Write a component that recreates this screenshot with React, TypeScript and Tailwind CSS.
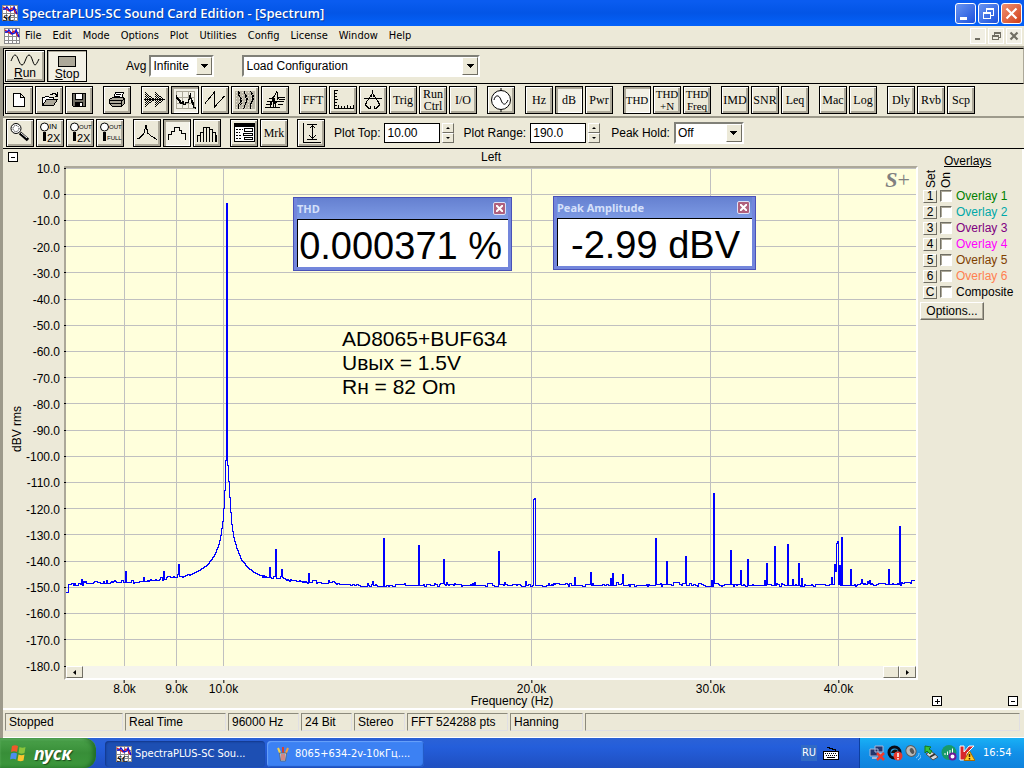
import type { ReactNode } from "react";
import { clsx } from "clsx";

const TAHOMA = "font-['DejaVu_Sans_Condensed','DejaVu_Sans',sans-serif]";
const ARIAL = "font-['Liberation_Sans',sans-serif]";

const MENU = ["File", "Edit", "Mode", "Options", "Plot", "Utilities", "Config", "License", "Window", "Help"];

/* ── Spectrum data ──────────────────────────────────── */

const PLOT_W = 850;
const PLOT_H = 498;

const X_TICKS = [
  { x: 58, label: "8.0k" },
  { x: 110, label: "9.0k" },
  { x: 157, label: "10.0k" },
  { x: 465, label: "20.0k" },
  { x: 644, label: "30.0k" },
  { x: 772, label: "40.0k" },
];

const Y_TICKS = Array.from({ length: 20 }, (_, i) => 10 - i * 10);

// Noise floor and the skirt of the fundamental, [x, y] in plot units
const FLOOR: [number, number][] = [
  [3, 416], [58, 414], [77, 413], [97, 411], [122, 407], [131, 403], [140, 397], [145, 391], [149, 384],
  [152, 376], [154, 367], [156, 353], [157, 340], [158, 322], [159, 292], [161, 297], [163, 329], [164, 344],
  [165, 356], [167, 369], [170, 380], [175, 392], [182, 400], [189, 405], [199, 409], [214, 410], [224, 413],
  [247, 414], [277, 416], [307, 417], [750, 417], [830, 416], [849, 414],
];

const PEAKS: Record<number, number> = {
  15: 411, 40: 412, 48: 412, 59: 403, 77: 409, 97: 403, 112: 396, 160: 35,
  203: 399, 209: 381, 215: 401, 242: 405, 262: 412, 306: 413, 317: 370, 352: 377, 377: 391, 432: 383,
  459: 413, 467: 331, 468: 330, 508: 409, 524: 404, 544: 410, 546: 405, 556: 406, 589: 370, 600: 393,
  619: 388, 645: 412, 647: 325, 664: 382, 674: 402, 681: 391, 698: 412, 700: 395, 708: 378, 721: 376,
  726: 411, 732: 395, 735: 410, 765: 409, 768: 396, 769: 403, 770: 375, 771: 373, 773: 397, 775: 369,
  784: 401, 795: 411, 803: 412, 822: 401, 833: 358,
};

function floorAt(x: number) {
  const i = FLOOR.findIndex((p) => p[0] >= x);
  if (i <= 0) return FLOOR[0][1];
  const [x0, y0] = FLOOR[i - 1];
  const [x1, y1] = FLOOR[i];
  return Math.round(y0 + ((y1 - y0) * (x - x0)) / (x1 - x0));
}

function buildTrace() {
  let seed = 7;
  const rnd = () => {
    seed = (seed * 16807) % 2147483647;
    return seed / 2147483647;
  };
  let d = "M0 424.5H2.5";
  let noise = 0;
  for (let x = 2; x < PLOT_W - 2; x++) {
    if (rnd() > 0.5) {
      const r = rnd();
      noise = r < 0.5 ? 0 : r < 0.75 ? -1 : r < 0.87 ? 1 : r < 0.97 ? -2 : -3;
    }
    const calm = x > 128 && x < 195;
    const y = PEAKS[x] ?? floorAt(x) + (calm ? 0 : noise);
    d += `V${y + 0.5}H${x + 1.5}`;
  }
  return d;
}

const TRACE = buildTrace();

/* ── Small controls ─────────────────────────────────── */

function ToolButton({ label, pressed, children }: { label: string; pressed?: boolean; children: ReactNode }) {
  return (
    <button
      aria-label={label}
      aria-pressed={pressed}
      className={clsx(
        "flex size-7 shrink-0 flex-col items-center justify-center border border-black font-['Liberation_Serif',serif] text-xs leading-3 text-black",
        pressed
          ? "bg-[#f3f1e6] shadow-[inset_2px_2px_0_#aca899,inset_-1px_-1px_0_#fff]"
          : "bg-[#ece9d8] shadow-[inset_1px_1px_0_#fff,inset_-2px_-2px_0_#aca899]"
      )}
    >
      {children}
    </button>
  );
}

function Icon({ children }: { children: ReactNode }) {
  return (
    <svg viewBox="0 0 26 26" className="size-[26px] fill-none stroke-black" shapeRendering="crispEdges">
      {children}
    </svg>
  );
}

function Combo({ label, value, className }: { label: string; value: string; className: string }) {
  return (
    <div
      className={clsx(
        "relative h-[22px] border-2 border-t-[#808078] border-r-white border-b-white border-l-[#808078] bg-white",
        className
      )}
    >
      <select aria-label={label} className="block h-full w-full appearance-none bg-white pl-0.5 text-xs text-black outline-none">
        <option>{value}</option>
      </select>
      <span className="pointer-events-none absolute inset-y-0 right-0 flex w-4 items-center justify-center border border-t-white border-r-[#716f64] border-b-[#716f64] border-l-white bg-[#ece9d8]">
        <svg viewBox="0 0 7 4" className="h-1 w-[7px]" shapeRendering="crispEdges">
          <path d="M0 0h7L3.500 4z" />
        </svg>
      </span>
    </div>
  );
}

function NumberField({ id, label, value }: { id: string; label: string; value: string }) {
  return (
    <div className="flex items-center">
      <label htmlFor={id} className="mr-1 whitespace-nowrap">
        {label}
      </label>
      <input id={id} defaultValue={value} className="h-5 w-14 border border-black bg-white px-0.5 text-xs text-black outline-none" />
      <div className="ml-0.5 flex flex-col">
        {["up", "down"].map((dir) => (
          <button
            key={dir}
            aria-label={`${label} ${dir}`}
            className="flex h-2.5 w-3 items-center justify-center border border-t-white border-r-[#716f64] border-b-[#716f64] border-l-white"
          >
            <svg viewBox="0 0 4 2" className="h-0.5 w-1">
              <path d={dir === "up" ? "M0 2h4L2 0z" : "M0 0h4L2 2z"} />
            </svg>
          </button>
        ))}
      </div>
    </div>
  );
}

function ExpandBox({ label, plus }: { label: string; plus?: boolean }) {
  return (
    <button aria-label={label} className="flex size-2.5 shrink-0 items-center justify-center border border-black bg-white">
      <svg viewBox="0 0 8 8" className="size-2 stroke-black" shapeRendering="crispEdges">
        <path d={plus ? "M2 4.500h5M4.500 2v5" : "M2 4.500h4"} />
      </svg>
    </button>
  );
}

function AppLogo({ small }: { small?: boolean }) {
  return (
    <svg viewBox="0 0 16 16" className="size-4 shrink-0">
      <path fill="#fff" d="M0 0h16v16H0z" />
      <path
        stroke="#8c8c8c"
        fill="none"
        shapeRendering="crispEdges"
        d="M.5 0v16M4.500 0v16M8.500 0v16M12.500 0v16M15.500 0v16M0 .5h16M0 4.500h16M0 8.500h16M0 12.500h16M0 15.500h16"
      />
      <path stroke="#e01020" strokeWidth="1.300" fill="none" d="M1 2l3 2 3 2 3-3 2 1 1 3 2 2" />
      <path stroke="#1010e0" strokeWidth="1.300" fill="none" d="M1 4h2l2-2 3 4 3-1 1-3 2 4 1 3" />
      {!small && (
        <text x="1" y="15.500" fontSize="9" fontWeight="bold" fontStyle="italic" className="font-['Liberation_Serif',serif]">
          SC
        </text>
      )}
    </svg>
  );
}

function Magnifier({ line1, line2 }: { line1: string; line2: string }) {
  return (
    <svg viewBox="0 0 26 26" className="size-[26px] fill-none stroke-black">
      <circle cx="7.500" cy="7" r="4" fill="#fff" />
      <path d="M7.500 12v9" strokeWidth="3" />
      <g stroke="none" fill="#000" className={ARIAL}>
        <text x="12" y="9" fontSize={line1 === "IN" ? 8 : 6}>{line1}</text>
        <text x="10" y={line2 === "2X" ? 22 : 20} fontSize={line2 === "2X" ? 11 : 6}>{line2}</text>
      </g>
    </svg>
  );
}

/* ── Toolbars ───────────────────────────────────────── */

function MainToolbar() {
  return (
    <div className="flex h-9 items-center border border-r-[#aca899] border-black px-px text-xs">
      <button className="flex h-8 w-10 flex-col items-center border border-black text-xs leading-3 shadow-[inset_1px_1px_0_#fff,inset_-2px_-2px_0_#aca899]">
        <svg viewBox="0 0 30 14" className="mt-0.5 h-3.5 w-[30px] fill-none stroke-black">
          <path d="M1 8C3 3 4 2 5 2c3 0 4 10 7 10s4-10 7-10 4 10 6 10c1 0 2-2 4-6" />
        </svg>
        <span><u>R</u>un</span>
      </button>
      <button
        aria-pressed="true"
        className="ml-0.5 flex h-8 w-10 flex-col items-center border border-black bg-[#f3f1e6] text-xs leading-3 shadow-[inset_1px_1px_0_#aca899]"
      >
        <span className="mt-[5px] mb-px h-[11px] w-[18px] border border-black bg-[#aca899]" />
        <span><u>S</u>top</span>
      </button>
      <span className="mr-[3px] ml-[39px]">Avg</span>
      <Combo label="Averaging" value="Infinite" className="w-[65px]" />
      <Combo label="Configuration" value="Load Configuration" className="ml-7 w-[238px]" />
    </div>
  );
}

function ViewToolbar() {
  return (
    <div className="flex h-8 items-center gap-2.5 border-l border-black px-px">
      <div className="flex gap-0.5">
        <ToolButton label="New">
          <Icon><path d="M7.500 6.500h7l4 4v9h-11zM14.500 6.500v4h4" fill="#fff" /></Icon>
        </ToolButton>
        <ToolButton label="Open">
          <Icon>
            <path d="M6.500 18.500v-8h2l1-1h3l1 1h4v2" fill="#fff" />
            <path d="M6.500 18.500l4-6h11l-4 6z" fill="#aca899" />
            <path d="M14 7.500h2l1-1h2l2 2M21.500 5v4h-3" />
          </Icon>
        </ToolButton>
        <ToolButton label="Save">
          <Icon>
            <path d="M6.500 6.500h13v13h-12l-1-1z" fill="#716f64" />
            <path d="M9.500 6.500h7v6h-7z" fill="#fff" />
            <path d="M9 15h8v5H9z" fill="#000" stroke="none" />
            <path d="M14 16h2v3h-2z" fill="#fff" stroke="none" />
          </Icon>
        </ToolButton>
      </div>

      <ToolButton label="Print">
        <Icon>
          <path d="M9.500 11.500l2-6h8l-2 6z" fill="#fff" />
          <path d="M12 7.500h5M11 9.500h5" />
          <path d="M5.500 12.500l3-2h11l1 2v4l-3 3h-9l-3-3z" fill="#aca899" />
          <path d="M5 13.500h13M6 16.500h12M17.500 13v6M20 12l-2 2" />
        </Icon>
      </ToolButton>

      <div className="flex gap-0.5">
        <ToolButton label="Time series">
          <Icon>
            <path d="M2 12.500h21" />
            <path d="M3.500 5v16M5.500 7v12M7.500 9v8M9.500 10v6M11.500 11v4M13.500 5v16M15.500 7v12M17.500 9v8M19.500 10v6" strokeDasharray="1 1" />
            <path d="M4.500 6v14M6.500 8v10M8.500 9v8M10.500 11v4M14.500 6v14M16.500 8v10M18.500 9v8M20.500 11v4" strokeDasharray="1 1" />
          </Icon>
        </ToolButton>
        <ToolButton label="Spectrum" pressed>
          <Icon>
            <path stroke="#aca899" d="M4.500 4v18M10.500 4v18M16.500 4v18M22.500 4v18M4 4.500h19M4 10.500h19M4 16.500h19M4 21.500h19" />
            <path d="M4.500 8v3h2v2h2v3h2v-2h1v3h2v-2h3v-3h1v-3h1V6v5h1v4h2v5h2v2" />
            <path d="M5.500 10v2h2v3h2v1M17.500 10V8M20.500 13v5" />
          </Icon>
        </ToolButton>
        <ToolButton label="Phase">
          <Icon><path d="M3 16.500L12.500 5v15L22.500 9" /></Icon>
        </ToolButton>
        <ToolButton label="Spectrogram">
          <Icon>
            <path d="M3 4h20v18H3z" fill="#bcb8a8" stroke="none" />
            <path d="M4 5.500h18M4 8.500h18M4 11.500h18M4 14.500h18M4 17.500h18M4 20.500h18" stroke="#ece9d8" strokeDasharray="1 2" />
            <path d="M6.500 4v4l2 3v4l-2 3v4M12.500 4l1 5 1 4-1 4-2 5M18.500 4l2 5v4l-2 4v5" />
            <path d="M7.500 5v4l2 3v4l-2 3M14.500 8l1 4-1 5M19.500 5l2 4v4l-2 4" strokeDasharray="2 1" />
          </Icon>
        </ToolButton>
        <ToolButton label="3D surface">
          <Icon>
            <path d="M3 20.500h15M4 17.500h5l2-6 2 5 2-2h6M5 14.500h5l2-3 1 3M7 11.500h3l2-2 3-5 1 6h7M9 14.500h4v5M15 8l2 4h6M14 14.500h8M16 17.500h5M8 20v-5M11 20v-6M15.500 5v8" />
          </Icon>
        </ToolButton>
      </div>

      <div className="flex gap-0.5">
        <ToolButton label="FFT settings">FFT</ToolButton>
        <ToolButton label="Scaling">
          <Icon><path d="M4.500 3v18.500H24M4 3.500h4M4 6.500h3M4 9.500h3M4 12.500h4M4 15.500h3M4 18.500h3M8.500 22v-4M11.500 22v-3M14.500 22v-3M17.500 22v-4M20.500 22v-3M23.500 22v-4" /></Icon>
        </ToolButton>
        <ToolButton label="Calibration">
          <Icon><path d="M12.500 3v4M4 11.500h18M12.500 6l-3 5-3 4-1 3 3 3h2v-2M12.500 6l3 5 3 4 1 3-3 3h-2v-2M11.500 7v3M13.500 7v3" /></Icon>
        </ToolButton>
        <ToolButton label="Trigger">Trig</ToolButton>
        <ToolButton label="Run control"><span>Run</span><span>Ctrl</span></ToolButton>
        <ToolButton label="Input and output">I/O</ToolButton>
      </div>

      <ToolButton label="Signal generator">
        <svg viewBox="0 0 26 26" className="size-[26px] fill-none stroke-black">
          <circle cx="13" cy="13" r="9.500" fill="#fff" />
          <path d="M13 1v3M13 22v3M6 13c1-5 5-6 7 0s5 5 7 0" />
        </svg>
      </ToolButton>

      <div className="flex gap-0.5">
        <ToolButton label="Hertz">Hz</ToolButton>
        <ToolButton label="Decibels" pressed>dB</ToolButton>
        <ToolButton label="Power">Pwr</ToolButton>
      </div>
      <div className="flex gap-0.5">
        <ToolButton label="THD" pressed><span className="text-[11px]">THD</span></ToolButton>
        <ToolButton label="THD+N"><span className="text-[11px]">THD</span><span className="text-[11px]">+N</span></ToolButton>
        <ToolButton label="THD versus frequency"><span className="text-[11px]">THD</span><span className="text-[11px]">Freq</span></ToolButton>
      </div>
      <div className="flex gap-0.5">
        <ToolButton label="IMD">IMD</ToolButton>
        <ToolButton label="SNR">SNR</ToolButton>
        <ToolButton label="Leq">Leq</ToolButton>
      </div>
      <div className="flex gap-0.5">
        <ToolButton label="Macro">Mac</ToolButton>
        <ToolButton label="Log">Log</ToolButton>
      </div>
      <div className="flex gap-0.5">
        <ToolButton label="Delay">Dly</ToolButton>
        <ToolButton label="Reverb">Rvb</ToolButton>
        <ToolButton label="Scope">Scp</ToolButton>
      </div>
    </div>
  );
}

function PlotToolbar() {
  return (
    <div className="flex items-center gap-[9px] border-t-2 border-b border-t-[#9d9a8b] border-b-black py-px pl-[3px] text-xs">
      <div className="flex gap-0.5">
        <ToolButton label="Zoom">
          <svg viewBox="0 0 26 26" className="size-[26px] fill-none stroke-black">
            <circle cx="9" cy="8.500" r="5" fill="#fff" />
            <circle cx="9" cy="8.500" r="3" strokeDasharray="1 1" />
            <path d="M13 13l8 7" strokeWidth="3.500" />
            <path d="M14 13l6 5" stroke="#fff" />
          </svg>
        </ToolButton>
        <ToolButton label="Zoom in 2X"><Magnifier line1="IN" line2="2X" /></ToolButton>
        <ToolButton label="Zoom out 2X"><Magnifier line1="OUT" line2="2X" /></ToolButton>
        <ToolButton label="Zoom out full"><Magnifier line1="OUT" line2="FULL" /></ToolButton>
      </div>
      <div className="flex gap-0.5">
        <ToolButton label="Line">
          <Icon><path d="M3 18.500h2l3-3 2-2 2-8 2 8 4 3 5 3M12.500 5v5" /></Icon>
        </ToolButton>
        <ToolButton label="Steps" pressed>
          <Icon><path d="M4.500 20v-6h3v-3h3V7.500h5v3h2v3h4V20" /></Icon>
        </ToolButton>
        <ToolButton label="Bars">
          <Icon><path d="M3.500 22v-7h3v7M6.500 15v-3h3v10M9.500 12V7.500h3V22M12.500 7.500h3V22M15.500 9.500h3V22M18.500 12.500h3V22M21.500 15.500h1V22" /></Icon>
        </ToolButton>
      </div>
      <div className="flex gap-0.5">
        <ToolButton label="Properties">
          <Icon>
            <path d="M3.500 3.500h20v18h-20z" fill="#fff" />
            <path d="M3 5h21" strokeWidth="3" />
            <path d="M5 9.500h7M5 12.500h4M5 15.500h5M5 18.500h5" strokeDasharray="2 1" />
            <path d="M13.500 8.500h8v3h-8zM12.500 13.500h9v2h-9zM13.500 17.500h8v2h-8z" />
          </Icon>
        </ToolButton>
        <ToolButton label="Markers">Mrk</ToolButton>
      </div>
      <ToolButton label="Auto scale">
        <Icon><path d="M5.500 3v19H23M9 4.500h10M9 19.500h10M14.500 5v14M11.500 8.500l3-3 3 3M11.500 15.500l3 3 3-3" /></Icon>
      </ToolButton>
      <NumberField id="plot-top" label="Plot Top:" value="10.00" />
      <NumberField id="plot-range" label="Plot Range:" value="190.0" />
      <div className="ml-0.5 flex items-center gap-1 whitespace-nowrap">
        <span>Peak Hold:</span>
        <Combo label="Peak hold" value="Off" className="w-[70px]" />
      </div>
    </div>
  );
}

/* ── Plot ───────────────────────────────────────────── */

interface ValueWindowProps {
  title: string;
  value: string;
  className: string;
  valueClassName: string;
}

function ValueWindow({ title, value, className, valueClassName }: ValueWindowProps) {
  return (
    <div className={clsx("absolute border border-[#4a52b8] bg-[#7386dc] px-[3px] pb-[3px]", className)}>
      <div className="flex h-[21px] items-center justify-between bg-linear-to-b from-[#6580d0] to-[#7d9ae4]">
        <span className="pt-0.5 font-['Noto_Sans',sans-serif] text-[11px] font-bold text-[#d5e0fa]">{title}</span>
        <button aria-label={`Close ${title}`} className="mr-0.5 flex size-[13px] items-center justify-center rounded-xs border border-[#dce2f8] bg-[#b0607c]">
          <svg viewBox="0 0 7 7" className="size-[7px] stroke-white" strokeWidth="2">
            <path d="M0 0l7 7M7 0L0 7" />
          </svg>
        </button>
      </div>
      <div
        className={clsx(
          "h-12 border-t border-l border-black bg-white text-right text-[38px] leading-[53px] whitespace-nowrap text-black",
          valueClassName
        )}
      >
        {value}
      </div>
    </div>
  );
}

function Plot() {
  return (
    <div className="flex min-w-0 flex-1 flex-col text-xs">
      <h2 className="h-[17px] text-center leading-[17px]">Left</h2>
      <div className="relative flex min-h-0 flex-1 flex-col border-2 border-t-[#aca899] border-r-white border-b-white border-l-[#aca899] bg-[#ffffdc]">
        <div className="relative min-h-0 flex-1">
          <svg
            viewBox={`0 0 ${PLOT_W} ${PLOT_H}`}
            preserveAspectRatio="none"
            className="absolute inset-0 h-full w-full overflow-visible fill-none"
            shapeRendering="crispEdges"
          >
            {Y_TICKS.map((db, i) => {
              const y = Math.floor((i * PLOT_H) / 19) + 0.5;
              return (
                <g key={db}>
                  {i < 19 && <path d={`M0 ${y}H${PLOT_W}`} stroke="#c0c0c0" />}
                  <path d={`M-2 ${y}H0`} stroke="#000" />
                </g>
              );
            })}
            {X_TICKS.map((t) => (
              <path key={t.x} d={`M${t.x + 0.5} 0V${PLOT_H}`} stroke="#c0c0c0" />
            ))}
            <path d={TRACE} stroke="#0000ff" />
          </svg>
          <span className="absolute top-0 right-1.5 font-['Liberation_Serif',serif] text-[22px] leading-6 text-[#808080]">
            <b className="italic">S</b>+
          </span>
          <p className="absolute top-[159px] left-[276px] text-[21px] leading-6 whitespace-pre text-black">
            {"AD8065+BUF634\nUвых = 1.5V\nRн = 82 Om"}
          </p>
          <ValueWindow title="THD" value="0.000371 %" className="top-[29px] left-[227px] w-[219px]" valueClassName="pr-1.5" />
          <ValueWindow title="Peak Amplitude" value="-2.99 dBV" className="top-7 left-[487px] w-[203px]" valueClassName="pr-3" />
        </div>
        {/* Horizontal scroller */}
        <div className="flex h-3 bg-[#f5f4ec]">
          <button aria-label="Scroll left" className="flex w-[17px] items-center justify-center border border-t-white border-r-[#716f64] border-b-[#716f64] border-l-white bg-[#ece9d8]">
            <svg viewBox="0 0 3 5" className="h-[5px] w-[3px]"><path d="M3 0v5L0 2.500z" /></svg>
          </button>
          <div className="flex-1" />
          <div className="w-4 border border-t-white border-r-[#716f64] border-b-[#716f64] border-l-white bg-[#ece9d8]" />
          <button aria-label="Scroll right" className="flex w-[17px] items-center justify-center border border-t-white border-r-[#716f64] border-b-[#716f64] border-l-white bg-[#ece9d8]">
            <svg viewBox="0 0 3 5" className="h-[5px] w-[3px]"><path d="M0 0v5l3-2.500z" /></svg>
          </button>
        </div>
      </div>
      <div className="relative mx-0.5 h-[15px]">
        {X_TICKS.map((t) => (
          <span
            key={t.x}
            className="absolute top-0 flex -translate-x-1/2 flex-col items-center leading-3 before:h-[3px] before:w-px before:bg-black"
            style={{ left: `${((t.x + 0.5) / PLOT_W) * 100}%` }}
          >
            {t.label}
          </span>
        ))}
      </div>
      <p className="h-[13px] pl-[42px] text-center leading-[13px]">Frequency (Hz)</p>
    </div>
  );
}

const OVERLAYS = [
  { key: "1", name: "Overlay 1", color: "text-[#008000]" },
  { key: "2", name: "Overlay 2", color: "text-[#00a8a8]" },
  { key: "3", name: "Overlay 3", color: "text-[#800080]" },
  { key: "4", name: "Overlay 4", color: "text-[#ff00ff]" },
  { key: "5", name: "Overlay 5", color: "text-[#804000]" },
  { key: "6", name: "Overlay 6", color: "text-[#ff8050]" },
  { key: "C", name: "Composite", color: "text-black" },
];

function Overlays() {
  return (
    <aside className="flex w-[104px] shrink-0 flex-col pt-[5px] text-xs">
      <h2 className="pl-[26px] leading-[15px] underline">Overlays</h2>
      <div className="flex h-[19px] items-end gap-[3px] pl-[7px] leading-3">
        <span className="rotate-180 [writing-mode:vertical-rl]">Set</span>
        <span className="rotate-180 [writing-mode:vertical-rl]">On</span>
      </div>
      <ul>
        {OVERLAYS.map((o) => (
          <li key={o.key} className="flex h-4 items-center pl-[5px]">
            <button
              aria-label={`Set ${o.name}`}
              className="flex h-[13px] w-3.5 items-center justify-center border border-t-white border-r-[#716f64] border-b-[#716f64] border-l-white leading-3 text-black"
            >
              {o.key}
            </button>
            <input
              id={`overlay-${o.key}`}
              type="checkbox"
              className="ml-[3px] size-3 appearance-none border border-t-[#716f64] border-r-white border-b-white border-l-[#716f64] bg-white shadow-[inset_1px_1px_0_#aca899]"
            />
            <label htmlFor={`overlay-${o.key}`} className={clsx("ml-1 leading-4", o.color)}>
              {o.name}
            </label>
          </li>
        ))}
      </ul>
      <button className="mt-0.5 ml-0.5 h-[18px] w-16 border border-t-white border-r-[#716f64] border-b-[#716f64] border-l-white leading-4 text-black shadow-[inset_-1px_-1px_0_#aca899]">
        Options...
      </button>
      <div className="mt-auto mb-0.5 flex justify-between pr-1 pl-3.5">
        <ExpandBox label="Expand" plus />
        <ExpandBox label="Collapse" />
      </div>
    </aside>
  );
}

function SpectrumView() {
  return (
    <main className="flex min-h-0 flex-1 border-r-2 border-b-2 border-white">
      <div className="flex w-[61px] shrink-0">
        <div className="flex w-5 flex-col items-center pt-[3px] text-xs">
          <ExpandBox label="Collapse panel" />
          <span className="mt-auto mb-auto self-end pt-3 leading-3 [writing-mode:vertical-rl] rotate-180">dBV rms</span>
        </div>
        <div className="flex flex-1 flex-col justify-between pt-3.5 pr-1 pb-[35px] text-right text-xs leading-3">
          {Y_TICKS.map((db) => (
            <span key={db} className="-ml-3">{db.toFixed(1)}</span>
          ))}
        </div>
      </div>
      <Plot />
      <Overlays />
    </main>
  );
}

/* ── Status bar ─────────────────────────────────────── */

const STATUS = [
  { text: "Stopped", width: "w-[118px]" },
  { text: "Real Time", width: "w-[101px]" },
  { text: "96000 Hz", width: "w-[71px]" },
  { text: "24 Bit", width: "w-[51px]" },
  { text: "Stereo", width: "w-[51px]" },
  { text: "FFT 524288 pts", width: "w-[101px]" },
  { text: "Hanning", width: "w-[73px]" },
];

function StatusBar() {
  const cell = "h-[18px] border border-t-[#8c8a7c] border-r-[#e0dfe3] border-b-[#e0dfe3] border-l-[#8c8a7c] pl-[3px] leading-4 whitespace-nowrap";
  return (
    <footer className="flex h-7 gap-0.5 border-b border-white pt-[3px] pr-1 pl-0.5 text-xs">
      {STATUS.map((s) => (
        <span key={s.text} className={clsx(cell, s.width)}>{s.text}</span>
      ))}
      <span className={clsx(cell, "flex-1")} />
    </footer>
  );
}

/* ── Task bar ───────────────────────────────────────── */

function TrayIcons() {
  return (
    <div className="flex gap-0.5">
      <svg viewBox="0 0 16 16" className="size-4">
        <path fill="#24356c" stroke="#a9b6d8" d="M6 1h8v6H6zM1 4h8v7H1z" />
        <path fill="#a9b6d8" d="M3 12h5v2H3zM9 8h4v2H9z" />
        <path stroke="#f03a2c" strokeWidth="2.500" d="M8 8l7 7M15 8l-7 7" />
      </svg>
      <svg viewBox="0 0 16 16" className="size-4">
        <circle cx="7.500" cy="7.500" r="5.500" fill="#29a3e8" stroke="#0a0a14" strokeWidth="3" />
        <path d="M4 8a4 4 0 0 1 7-2L8 8z" fill="#111" />
        <circle cx="11" cy="11" r="4.500" fill="#e8382c" />
        <path d="M11 8v4M11 13v1.500" stroke="#fff" strokeWidth="1.500" />
      </svg>
      <svg viewBox="0 0 16 16" className="size-4">
        <ellipse cx="6" cy="6" rx="5" ry="5.500" fill="#b9b9b9" stroke="#5c5c5c" transform="rotate(-25 6 6)" />
        <ellipse cx="7" cy="6" rx="2" ry="3" fill="#555" transform="rotate(-25 7 6)" />
        <path d="M11 13c2-1 3-3 3-5M13 15c2-1 3-3 3-5" stroke="#8ed0ff" fill="none" />
      </svg>
      <svg viewBox="0 0 16 16" className="size-4">
        <path d="M3 9l7 6 5-3-7-6z" fill="#d8d8d8" stroke="#4c4c4c" />
        <path d="M7 12l5-3" stroke="#303030" strokeWidth="2" />
        <path d="M2 1l6 1-2 2 3 2-2 3-3-3-2 2z" fill="#39c23a" stroke="#157a1a" />
      </svg>
      <svg viewBox="0 0 16 16" className="size-4">
        <circle cx="8" cy="7.500" r="7.500" fill="#179a68" />
        <path d="M4 10V8M6.500 10V6.500M9 10V5M11.500 10V3.500" stroke="#fff" />
        <circle cx="11.500" cy="11.500" r="3" fill="#fff" stroke="#6a1b9a" strokeWidth="2" />
      </svg>
      <svg viewBox="0 0 16 16" className="size-4">
        <path d="M1 1h4v6l5-6h5L8 8v7H1z" fill="#d8282c" stroke="#fff" />
        <path d="M10.500 6l5.500 9.500H5z" fill="#ffc928" stroke="#a96a00" />
        <path d="M10.500 9v3M10.500 13v1.500" stroke="#402000" strokeWidth="1.500" />
      </svg>
    </div>
  );
}

function TaskBar() {
  return (
    <nav className={clsx("flex h-[30px] shrink-0 items-stretch bg-linear-to-b from-[#2b62d6] from-0% via-[#245edb] via-30% to-[#1f4fc0] text-[11px] text-white", TAHOMA)}>
      <button className="flex w-24 items-center gap-1.5 rounded-r-xl bg-linear-to-b from-[#4ba34b] via-[#388e38] to-[#3c983c] pl-2.5 shadow-[inset_-3px_0_4px_#1f6a24,inset_0_2px_2px_#6fc06f]">
        <svg viewBox="0 0 18 18" className="size-[18px]">
          <path d="M2 2c2-1 4-1 6 0L7 8C5 7 3 7 1 8z" fill="#f0582a" />
          <path d="M9.500 3c2 1 4 1 6 0l-1 6c-2 1-4 1-6 0z" fill="#8bc53c" />
          <path d="M1 9.500c2-1 4-1 6 0l-1 6c-2-1-4-1-6 0z" fill="#4d8df0" />
          <path d="M8.500 10.500c2 1 4 1 6 0l-1 6c-2 1-4 1-6 0z" fill="#fbc52e" />
        </svg>
        <span className="font-['Noto_Sans',sans-serif] text-lg leading-5 font-bold italic [text-shadow:1px_1px_1px_#1b4a1b]">пуск</span>
      </button>
      <div className="ml-[9px] flex items-center gap-0.5 pt-0.5 whitespace-nowrap">
        <button className="flex h-[26px] w-40 items-center gap-[3px] rounded-sm bg-[#1d4fb3] pl-[11px] shadow-[inset_1px_1px_2px_#12378a]">
          <AppLogo />
          SpectraPLUS-SC Sou...
        </button>
        <button className="flex h-[26px] w-[157px] items-center gap-1 rounded-sm bg-[#3c81f3] pl-2 shadow-[inset_-1px_-1px_1px_#2158c4,inset_1px_1px_1px_#6aa2fa]">
          <svg viewBox="0 0 16 16" className="size-4 fill-none">
            <path d="M6 9L3 2" stroke="#f0d050" strokeWidth="2" />
            <path d="M8 9V1" stroke="#d84030" strokeWidth="2" />
            <path d="M10 9l3-7" stroke="#f0a040" strokeWidth="2" />
            <path d="M4.500 7h7l-1 8h-5z" fill="#c8d0dc" stroke="#5a6a80" />
            <path d="M7 8v6M9 8v6" stroke="#d84030" />
          </svg>
          8065+634-2v-10кГц....
        </button>
      </div>
      <div className="ml-auto flex items-center gap-1.5 pr-5">
        <span className="bg-[#316ac5] px-px leading-4">RU</span>
        <svg viewBox="0 0 16 14" className="h-3.5 w-4" shapeRendering="crispEdges">
          <path d="M4 1h2v1h3v1h3v2" stroke="#000" fill="none" />
          <path d="M.5 5.500h15v8H.5z" fill="#fff" stroke="#000" />
          <path d="M2 7.500h12M3 9.500h11" stroke="#000" strokeDasharray="1 1" />
          <path d="M4 11.500h8" stroke="#000" />
        </svg>
      </div>
      <div className="flex w-[165px] items-center gap-2 border-l border-[#0c3fa0] bg-linear-to-b from-[#19b0f5] via-[#1290e8] to-[#0f82dc] pl-[9px]">
        <TrayIcons />
        <time>16:54</time>
      </div>
    </nav>
  );
}

/* ── Window ─────────────────────────────────────────── */

function TitleBar() {
  const box = "flex size-[21px] items-center justify-center rounded-[3px] border border-white";
  return (
    <header className="flex h-[26px] shrink-0 items-center bg-linear-to-b from-[#0a5cf0] from-5% via-[#0355e6] to-[#0462fa] pr-0.5 pl-0.5">
      <AppLogo />
      <h1 className="ml-1 flex-1 truncate pt-0.5 font-['Open_Sans',sans-serif] text-[13px] font-semibold text-white [text-shadow:1px_1px_0_#0a3a9a]">
        SpectraPLUS-SC Sound Card Edition - [Spectrum]
      </h1>
      <div className="flex gap-0.5">
        <button aria-label="Minimize" className={clsx(box, "bg-linear-to-br from-[#6a94f0] to-[#1c4fdc]")}>
          <svg viewBox="0 0 19 19" className="size-[19px]"><path d="M4 13h7v3H4z" fill="#fff" /></svg>
        </button>
        <button aria-label="Restore" className={clsx(box, "bg-linear-to-br from-[#6a94f0] to-[#1c4fdc]")}>
          <svg viewBox="0 0 19 19" className="size-[19px] fill-none stroke-white" shapeRendering="crispEdges">
            <path d="M7.500 8V4.500h7v7H12M7 5.500h8M4.500 8.500h7v6h-7zM4 9.500h8" />
          </svg>
        </button>
        <button aria-label="Close" className={clsx(box, "bg-linear-to-br from-[#f09070] to-[#d03c10]")}>
          <svg viewBox="0 0 19 19" className="size-[19px] stroke-white" strokeWidth="2.200"><path d="M4.500 4.500l10 10M14.500 4.500l-10 10" /></svg>
        </button>
      </div>
    </header>
  );
}

function MenuBar() {
  const box = "flex size-4 items-center justify-center border border-white bg-[#f1efe4]";
  return (
    <div className={clsx("flex h-[22px] shrink-0 items-center border-b-2 border-b-[#aca899] pr-0.5 pl-1 text-[11px]", TAHOMA)}>
      <AppLogo small />
      <nav className="ml-[5px] flex flex-1 gap-[11px]">
        {MENU.map((m) => (
          <a key={m} href={`#${m.toLowerCase()}`} className="leading-4 text-black">{m}</a>
        ))}
      </nav>
      <div className="flex gap-0.5">
        <button aria-label="Minimize child" className={box}>
          <svg viewBox="0 0 12 12" className="size-3"><path d="M3 8h5v2H3z" fill="#716f64" /></svg>
        </button>
        <button aria-label="Restore child" className={box}>
          <svg viewBox="0 0 12 12" className="size-3 fill-none stroke-[#716f64]" shapeRendering="crispEdges">
            <path d="M4.500 5V2.500h6v5H8M4 3.500h7M2.500 5.500h6v4h-6zM2 6.500h7" />
          </svg>
        </button>
        <button aria-label="Close child" className={box}>
          <svg viewBox="0 0 12 12" className="size-3 stroke-[#716f64]" strokeWidth="2.200"><path d="M2.500 2.500l7 7M9.500 2.500l-7 7" /></svg>
        </button>
      </div>
    </div>
  );
}

export default function App() {
  return (
    <div className={clsx("flex h-screen flex-col overflow-hidden bg-[#ece9d8] text-black", ARIAL)}>
      <TitleBar />
      <MenuBar />
      <div className="flex min-h-0 flex-1 flex-col border-l-3 border-[#9d9a8b]">
        <MainToolbar />
        <ViewToolbar />
        <PlotToolbar />
        <SpectrumView />
        <StatusBar />
      </div>
      <TaskBar />
    </div>
  );
}
